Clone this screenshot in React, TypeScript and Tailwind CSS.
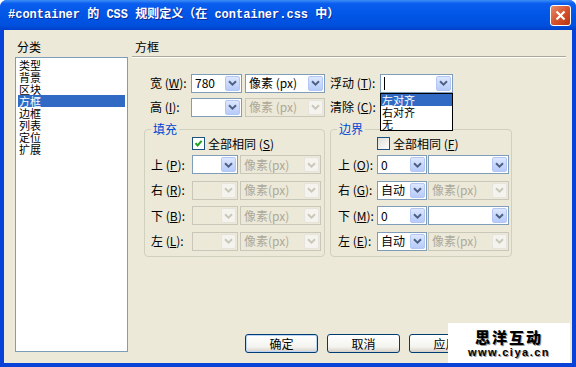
import clsx from 'clsx';

const CJK = "font-['Noto_Sans_CJK_SC','Noto_Sans',sans-serif]";

function Chevron({ off }: { off?: boolean }) {
  return (
    <svg width="9" height="6" viewBox="0 0 9 6">
      <path d="M1 1.2 L4.5 4.6 L8 1.2" fill="none" stroke={off ? '#C9C7BA' : '#4D6185'} strokeWidth="2" />
    </svg>
  );
}

function Combo({ w, value, off, caret }: { w: string; value?: string; off?: boolean; caret?: boolean }) {
  return (
    <div
      className={clsx(
        'flex h-[19px] shrink-0 border p-px',
        w,
        off ? 'border-[#C9C7BA] bg-[#ECE9D8]' : 'border-[#7F9DB9] bg-white'
      )}
    >
      <div
        className={clsx(
          'flex flex-1 items-center pl-[2px] text-[12px] leading-none',
          off ? 'text-[#ACA899]' : 'text-black'
        )}
      >
        {caret && <span className="h-[13px] w-px bg-black" />}
        {value}
      </div>
      <div
        className={clsx(
          'flex w-[15px] items-center justify-center rounded-[2px] border',
          off
            ? 'border-[#E6E4DC] bg-[#F4F3EE]'
            : 'border-[#B3C7F6] bg-[linear-gradient(to_bottom,#DDE7FE,#B7CBF9)]'
        )}
      >
        <Chevron off={off} />
      </div>
    </div>
  );
}

function Lbl({ text, hot, w }: { text: string; hot: string; w: string }) {
  return (
    <span className={clsx('shrink-0 text-[12px] leading-none text-black', w)}>
      {text} (<u>{hot}</u>):
    </span>
  );
}

function Check({ on }: { on?: boolean }) {
  return (
    <span
      className={clsx(
        'flex h-[13px] w-[13px] items-center justify-center border border-[#1C5180]',
        on ? 'bg-white' : 'bg-[linear-gradient(135deg,#DCDCD7,#FFFFFF)]'
      )}
    >
      {on && (
        <svg width="9" height="9" viewBox="0 0 9 9">
          <path d="M1.5 4.2 L3.6 6.5 L7.6 1.8" fill="none" stroke="#21A121" strokeWidth="2" />
        </svg>
      )}
    </span>
  );
}

type Side = { side: string; hot: string; v?: string; on1?: boolean; v2?: string; on2?: boolean };

const padding: Side[] = [
  { side: '上', hot: 'P', on1: true, v2: '像素(px)' },
  { side: '右', hot: 'R', v2: '像素(px)' },
  { side: '下', hot: 'B', v2: '像素(px)' },
  { side: '左', hot: 'L', v2: '像素(px)' },
];

const margin: Side[] = [
  { side: '上', hot: 'O', v: '0', on1: true, on2: true },
  { side: '右', hot: 'G', v: '自动', on1: true, v2: '像素(px)' },
  { side: '下', hot: 'M', v: '0', on1: true, on2: true },
  { side: '左', hot: 'E', v: '自动', on1: true, v2: '像素(px)' },
];

function Group({
  title,
  hot,
  checked,
  rows,
  w,
  c1,
  c2,
  pl,
  gap,
  lw,
  cbx,
}: {
  title: string;
  hot: string;
  checked?: boolean;
  rows: Side[];
  w: string;
  c1: string;
  c2: string;
  pl: string;
  gap: string;
  lw: string;
  cbx: string;
}) {
  return (
    <fieldset className={clsx('h-[134px] shrink-0 rounded-[4px] border border-[#D0D0BF]', w)}>
      <legend className="ml-[6px] px-[2px] text-[12px] leading-[12px] text-[#0046D5]">{title}</legend>
      <div className={clsx('mt-[2px] flex items-center gap-[3px] text-[12px] leading-none', cbx)}>
        <Check on={checked} />
        <span>
          全部相同 (<u>{hot}</u>)
        </span>
      </div>
      <div className={clsx('mt-[5px] flex flex-col gap-[6.5px]', pl)}>
        {rows.map((r) => (
          <div key={r.side} className="flex items-center">
            <Lbl text={r.side} hot={r.hot} w={lw} />
            <Combo w={c1} value={r.v} off={!r.on1} />
            <span className={gap} />
            <Combo w={c2} value={r.v2} off={!r.on2} />
          </div>
        ))}
      </div>
    </fieldset>
  );
}

function Button({ label, def }: { label: string; def?: boolean }) {
  return (
    <button
      className={clsx(
        'flex h-[19px] w-[73px] items-center justify-center rounded-[3px] border border-[#003C74] text-[12px] leading-none text-black',
        'bg-[linear-gradient(to_bottom,#FFFFFF,#F3F3EF_70%,#D6D0C5)]',
        def && 'shadow-[inset_0_0_0_1px_#BCD4F6]'
      )}
    >
      {label}
    </button>
  );
}

const categories = ['类型', '背景', '区块', '方框', '边框', '列表', '定位', '扩展'];

export default function App() {
  return (
    <div className={clsx('relative flex h-[367px] w-[576px] flex-col overflow-hidden bg-white', CJK)}>
      <div className="flex h-full flex-col rounded-t-[7px] bg-[#0842D6]">
        {/* title bar */}
        <div className="flex h-[30px] shrink-0 items-center rounded-t-[7px] bg-[linear-gradient(to_bottom,#3D8EF6,#0A5DEE_12%,#0055E5_55%,#0050DE_85%,#0040C8)] pl-[8px] pr-[5px]">
          <span className="font-['Liberation_Mono','Noto_Sans_CJK_SC',monospace] text-[12px] font-bold whitespace-pre text-white [text-shadow:1px_1px_0_#0A2A9A]">
            #container 的 CSS 规则定义（在 container.css 中）
          </span>
          <span className="ml-auto flex h-[21px] w-[21px] items-center justify-center rounded-[3px] border border-white bg-[linear-gradient(135deg,#E98C6E,#D6532E_50%,#B8350F)]">
            <svg width="11" height="11" viewBox="0 0 11 11">
              <path d="M1.5 1.5 L9.5 9.5 M9.5 1.5 L1.5 9.5" stroke="white" strokeWidth="2.2" />
            </svg>
          </span>
        </div>

        {/* body */}
        <div className="mx-[4px] mb-[4px] flex flex-1 bg-[#ECE9D8] pt-[11px]">
          {/* category list */}
          <div className="ml-[11px] flex w-[113px] shrink-0 flex-col">
            <span className="pl-[2px] text-[12px] leading-[12px] text-black">分类</span>
            <div className="mt-[4px] h-[295px] border border-[#7F9DB9] bg-white p-px">
              {categories.map((c) => (
                <div
                  key={c}
                  className={clsx(
                    'mx-px h-[12px] pl-px text-[11px] leading-[12px]',
                    c === '方框' ? 'bg-[#316AC5] text-white' : 'text-black'
                  )}
                >
                  {c}
                </div>
              ))}
            </div>
          </div>

          {/* right panel */}
          <div className="ml-[4px] flex w-[434px] shrink-0 flex-col">
            <span className="pl-[3px] text-[12px] leading-[12px] text-black">方框</span>
            <div className="mt-[3px] h-[2px] border-t border-[#ACA899] bg-white" />

            <div className="mt-[15px] flex h-[20px] items-center pl-[18px]">
              <Lbl text="宽" hot="W" w="w-[41px]" />
              <Combo w="w-[51px]" value="780" />
              <span className="w-[3px]" />
              <Combo w="w-[80px]" value="像素 (px)" />
              <span className="w-[5px]" />
              <Lbl text="浮动" hot="T" w="w-[50px]" />
              <div className="relative">
                <Combo w="w-[73px]" caret />
                <div className="absolute top-full left-0 z-10 w-[73px] border border-black bg-white text-[11px] leading-[12px]">
                  <div className="h-[12px] bg-[#316AC5] pl-px text-white">左对齐</div>
                  <div className="h-[12px] pl-px text-black">右对齐</div>
                  <div className="h-[12px] pl-px text-black">无</div>
                </div>
              </div>
            </div>

            <div className="mt-[4px] flex h-[20px] items-center pl-[18px]">
              <Lbl text="高" hot="I" w="w-[41px]" />
              <Combo w="w-[51px]" />
              <span className="w-[3px]" />
              <Combo w="w-[80px]" value="像素 (px)" off />
              <span className="w-[5px]" />
              <Lbl text="清除" hot="C" w="w-[50px]" />
              <Combo w="w-[73px]" />
            </div>

            <div className="mt-[6px] flex gap-[5px] pl-[12px]">
              <Group
                title="填充"
                hot="S"
                checked
                rows={padding}
                w="w-[181px]"
                c1="w-[46px]"
                c2="w-[81px]"
                pl="pl-[6px]"
                gap="w-[2px]"
                lw="w-[41px]"
                cbx="pl-[47px]"
              />
              <Group
                title="边界"
                hot="F"
                rows={margin}
                w="w-[182px]"
                c1="w-[50px]"
                c2="w-[81px]"
                pl="pl-[7px]"
                gap="w-px"
                lw="w-[39px]"
                cbx="pl-[46px]"
              />
            </div>

            <div className="mt-[77px] flex gap-[9px] pl-[113px]">
              <Button label="确定" def />
              <Button label="取消" />
              <Button label="应用" />
            </div>
          </div>
        </div>
      </div>

      {/* watermark */}
      <div className="absolute top-[323px] left-[448px] flex h-[40px] w-[122px] flex-col items-center justify-center bg-white">
        <span className="text-[15px] leading-[15px] font-black tracking-[2px] text-black [text-shadow:1px_1px_0_#9A9A9A]">
          思洋互动
        </span>
        <span className="mt-[3px] font-['Liberation_Sans',sans-serif] text-[11px] leading-[11px] font-bold tracking-[1.5px] text-black [text-shadow:1px_1px_0_#9A9A9A]">
          www.ciya.cn
        </span>
      </div>
    </div>
  );
}
